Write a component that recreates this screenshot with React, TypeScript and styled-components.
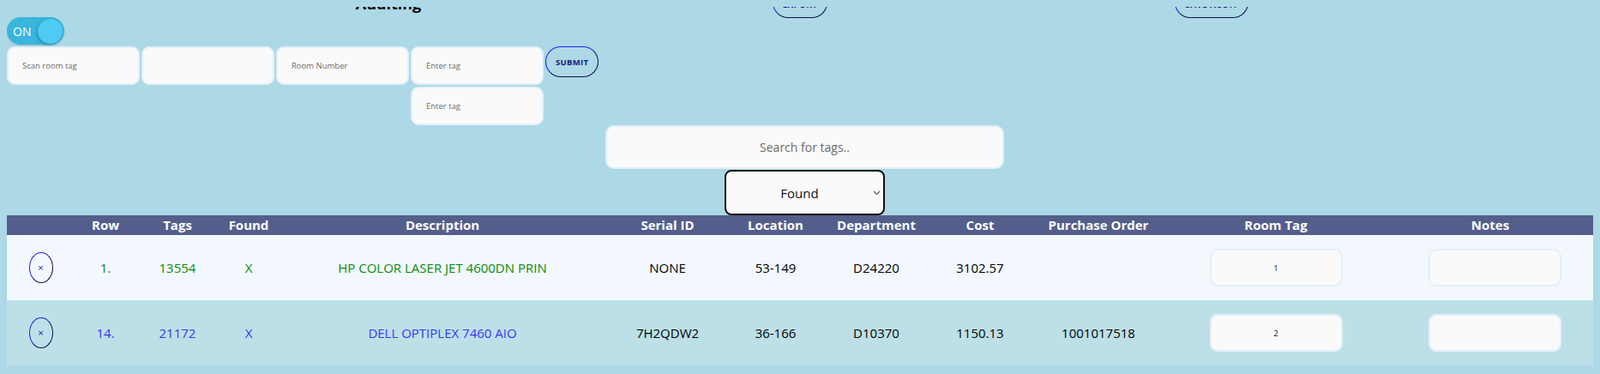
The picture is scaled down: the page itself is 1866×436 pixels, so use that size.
import React, { useState } from "react";
import styled, { createGlobalStyle } from "styled-components";

const GlobalStyle = createGlobalStyle`
  body {
    margin: 8px;
    background: #add8e6;
    font-family: "Open Sans", "Noto Sans", sans-serif;
    overflow: hidden;
  }
`;

// the page is photographed scrolled a little down, so the top bar is cut
const Page = styled.div`
  margin-top: -24px;
`;

const TopBar = styled.div`
  display: grid;
  grid-template-columns: repeat(3, 480px);
  justify-content: center;
  justify-items: center;
  align-items: end;
  height: 36px;
`;

const Title = styled.h2`
  margin: 0 0 7px;
  font-size: 18px;
  line-height: 1;
  font-weight: 700;
  color: #000;
`;

const OutlineButton = styled.button`
  box-sizing: border-box;
  height: 36px;
  padding: 0 11px;
  background: transparent;
  border: 1px solid #2020e0;
  border-right-color: #101050;
  border-bottom-color: #101050;
  border-radius: 18px;
  color: #14148a;
  font-family: "Open Sans", sans-serif;
  font-size: 9.5px;
  font-weight: 700;
  letter-spacing: 0.3px;
  cursor: pointer;
`;

const BarButton = styled(OutlineButton)`
  margin-bottom: -1px;
  padding-top: 4px;
  font-size: 10px;
`;

const Toggle = styled.div`
  width: 67px;
  height: 32px;
  box-sizing: border-box;
  padding: 0 2px 0 7px;
  display: flex;
  align-items: center;
  justify-content: space-between;
  border-radius: 16px;
  background: #3ab5dc;
  box-shadow: 0 1px 2px rgba(0, 0, 0, 0.15);
  color: #fff;
  font-size: 14px;
`;

const Knob = styled.span`
  width: 29px;
  height: 29px;
  border-radius: 50%;
  background: #4ecbf2;
  box-shadow: -1px 1px 3px rgba(0, 60, 90, 0.4);
`;

const FormRow = styled.div`
  margin-top: 2px;
  display: flex;
  align-items: flex-start;
  gap: 2px;
`;

const Stack = styled.div`
  display: flex;
  flex-direction: column;
  gap: 2px;
`;

const Field = styled.input<{ $w?: number; $h?: number; $center?: boolean }>`
  box-sizing: border-box;
  width: ${(p) => p.$w ?? 155}px;
  height: ${(p) => p.$h ?? 45}px;
  padding: 0 ${(p) => (p.$center ? 0 : 16)}px;
  background: #fafafa;
  border: 2px solid #e2f0fa;
  border-radius: 9px;
  outline: none;
  font-family: "Open Sans", sans-serif;
  font-size: 9.5px;
  color: #111;
  text-align: ${(p) => (p.$center ? "center" : "left")};

  &::placeholder {
    color: #6b6b6b;
  }
`;

const SearchArea = styled.div`
  display: flex;
  flex-direction: column;
  align-items: center;
  gap: 1px;
  padding-left: 11px;
`;

const SearchInput = styled.input`
  box-sizing: border-box;
  width: 465px;
  height: 51px;
  background: #fafafa;
  border: 2px solid #e2f0fa;
  border-radius: 10px;
  outline: none;
  text-align: center;
  font-family: "Open Sans", sans-serif;
  font-size: 14px;

  &::placeholder {
    color: #6b6b6b;
  }
`;

const SelectWrap = styled.div`
  position: relative;
  width: 187px;
  height: 53px;
`;

const Select = styled.select`
  box-sizing: border-box;
  width: 100%;
  height: 100%;
  appearance: none;
  padding: 0 12px 0 0;
  background: #fafafa;
  border: 2px solid #111;
  border-radius: 8px;
  text-align: center;
  text-align-last: center;
  font-family: "Open Sans", sans-serif;
  font-size: 15px;
  color: #111;
`;

const Chevron = styled.svg`
  position: absolute;
  right: 5px;
  top: 24px;
  pointer-events: none;
`;

const Table = styled.table`
  width: calc(100% + 3px);
  table-layout: fixed;
  border-collapse: collapse;
`;

const HeadRow = styled.tr`
  background: #545e8b;
`;

const Th = styled.th`
  height: 23px;
  padding: 0;
  color: #fff;
  font-size: 15px;
  font-weight: 700;
  line-height: 23px;
  text-align: center;
  white-space: nowrap;
`;

const BodyRow = styled.tr<{ $alt?: boolean }>`
  background: ${(p) => (p.$alt ? "#bde0e8" : "#f2f8fd")};
`;

const Td = styled.td<{ $tone?: string }>`
  height: 76px;
  padding: 0;
  text-align: center;
  vertical-align: middle;
  font-size: 15px;
  color: ${(p) => p.$tone ?? "#000"};
  white-space: nowrap;
  overflow: hidden;
`;

const NotesCell = styled(Td)`
  padding-left: 10px;
`;

const RemoveButton = styled.button`
  width: 28px;
  height: 36px;
  padding: 0;
  background: transparent;
  border: 1px solid #2020e0;
  border-right-color: #101050;
  border-bottom-color: #101050;
  border-radius: 14px / 18px;
  color: #14148a;
  font-family: "DejaVu Sans", sans-serif;
  font-size: 9px;
  line-height: 1;
  cursor: pointer;
`;

const columns = [79, 72, 96, 70, 382, 143, 109, 126, 116, 160, 254];

const headers = [
  "",
  "Row",
  "Tags",
  "Found",
  "Description",
  "Serial ID",
  "Location",
  "Department",
  "Cost",
  "Purchase Order",
  "Room Tag",
  "Notes",
];

interface Item {
  row: string;
  tag: string;
  found: string;
  description: string;
  serial: string;
  location: string;
  department: string;
  cost: string;
  po: string;
  roomTag: string;
  tone: string;
}

const items: Item[] = [
  {
    row: "1.",
    tag: "13554",
    found: "X",
    description: "HP COLOR LASER JET 4600DN PRIN",
    serial: "NONE",
    location: "53-149",
    department: "D24220",
    cost: "3102.57",
    po: "",
    roomTag: "1",
    tone: "#0a8a0a",
  },
  {
    row: "14.",
    tag: "21172",
    found: "X",
    description: "DELL OPTIPLEX 7460 AIO",
    serial: "7H2QDW2",
    location: "36-166",
    department: "D10370",
    cost: "1150.13",
    po: "1001017518",
    roomTag: "2",
    tone: "#3535f5",
  },
];

export default function App() {
  const [filter, setFilter] = useState("found");

  return (
    <>
      <GlobalStyle />
      <Page>
        <TopBar>
          <Title>Auditing</Title>
          <BarButton>EXPORT</BarButton>
          <BarButton>SAVE AUDIT</BarButton>
        </TopBar>

        <Toggle>
          ON
          <Knob />
        </Toggle>

        <FormRow>
          <Field placeholder="Scan room tag" />
          <Field />
          <Field placeholder="Room Number" />
          <Stack>
            <Field placeholder="Enter tag" />
            <Field placeholder="Enter tag" />
          </Stack>
          <OutlineButton>SUBMIT</OutlineButton>
        </FormRow>

        <SearchArea>
          <SearchInput placeholder="Search for tags.." />
          <SelectWrap>
            <Select value={filter} onChange={(e) => setFilter(e.target.value)}>
              <option value="found">Found</option>
              <option value="missing">Missing</option>
              <option value="all">All</option>
            </Select>
            <Chevron width="9" height="6" viewBox="0 0 9 6">
              <path d="M1 1l3.5 3.5L8 1" fill="none" stroke="#555" strokeWidth="1.1" />
            </Chevron>
          </SelectWrap>
        </SearchArea>

        <Table>
          <colgroup>
            {columns.map((w, i) => (
              <col key={i} style={{ width: w }} />
            ))}
            <col />
          </colgroup>
          <thead>
            <HeadRow>
              {headers.map((h, i) => (
                <Th key={i}>{h}</Th>
              ))}
            </HeadRow>
          </thead>
          <tbody>
            {items.map((item, i) => (
              <BodyRow key={item.tag} $alt={i % 2 === 1}>
                <Td>
                  <RemoveButton>×</RemoveButton>
                </Td>
                <Td $tone={item.tone}>{item.row}</Td>
                <Td $tone={item.tone}>{item.tag}</Td>
                <Td $tone={item.tone}>{item.found}</Td>
                <Td $tone={item.tone}>{item.description}</Td>
                <Td>{item.serial}</Td>
                <Td>{item.location}</Td>
                <Td>{item.department}</Td>
                <Td>{item.cost}</Td>
                <Td>{item.po}</Td>
                <Td>
                  <Field $w={155} $h={44} $center defaultValue={item.roomTag} />
                </Td>
                <NotesCell>
                  <Field $w={155} $h={44} />
                </NotesCell>
              </BodyRow>
            ))}
          </tbody>
        </Table>
      </Page>
    </>
  );
}
